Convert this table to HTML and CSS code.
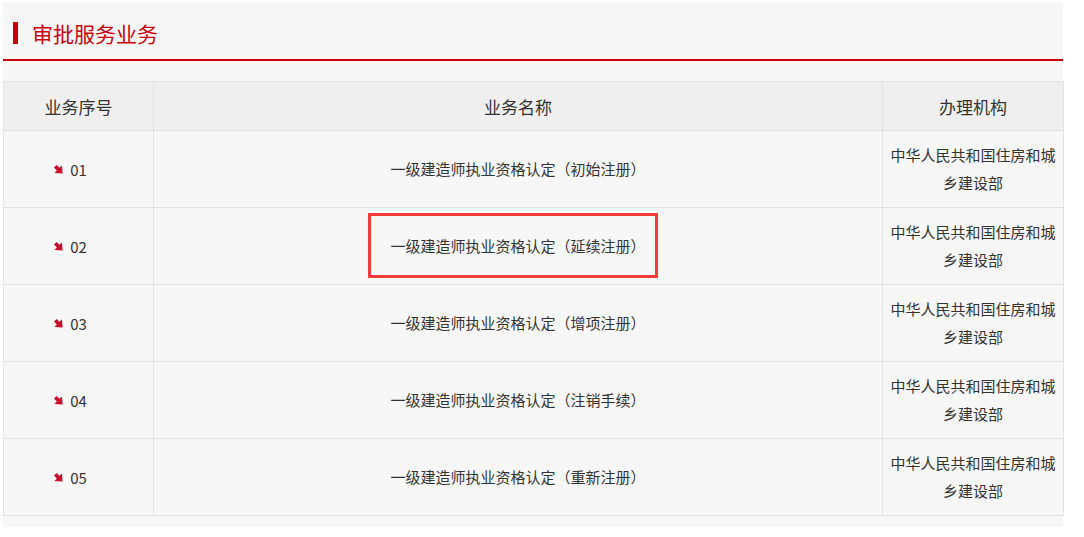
FILE: index.html
```html
<!DOCTYPE html>
<html lang="zh-CN">
<head>
<meta charset="utf-8">
<title>审批服务业务</title>
<link rel="stylesheet" href="styles.css">
</head>
<body>
<div class="panel">
  <div class="panel-head">
    <span class="bar"></span>
    <h2 class="title">审批服务业务</h2>
  </div>
  <table class="biz">
    <colgroup>
      <col class="c1"><col class="c2"><col class="c3">
    </colgroup>
    <thead>
      <tr><th>业务序号</th><th>业务名称</th><th>办理机构</th></tr>
    </thead>
    <tbody>
      <tr>
        <td><span class="no"><svg class="arr" viewBox="0 0 9 9" width="9" height="9"><path d="M0 2.6 L2.6 0 L5.4 2.8 L8 0.4 L8.6 8.6 L0.4 8 L2.8 5.4 Z" fill="#c8102e"/></svg>01</span></td>
        <td>一级建造师执业资格认定（初始注册）</td>
        <td class="org">中华人民共和国住房和城乡建设部</td>
      </tr>
      <tr>
        <td><span class="no"><svg class="arr" viewBox="0 0 9 9" width="9" height="9"><path d="M0 2.6 L2.6 0 L5.4 2.8 L8 0.4 L8.6 8.6 L0.4 8 L2.8 5.4 Z" fill="#c8102e"/></svg>02</span></td>
        <td><span class="marked">一级建造师执业资格认定（延续注册）</span></td>
        <td class="org">中华人民共和国住房和城乡建设部</td>
      </tr>
      <tr>
        <td><span class="no"><svg class="arr" viewBox="0 0 9 9" width="9" height="9"><path d="M0 2.6 L2.6 0 L5.4 2.8 L8 0.4 L8.6 8.6 L0.4 8 L2.8 5.4 Z" fill="#c8102e"/></svg>03</span></td>
        <td>一级建造师执业资格认定（增项注册）</td>
        <td class="org">中华人民共和国住房和城乡建设部</td>
      </tr>
      <tr>
        <td><span class="no"><svg class="arr" viewBox="0 0 9 9" width="9" height="9"><path d="M0 2.6 L2.6 0 L5.4 2.8 L8 0.4 L8.6 8.6 L0.4 8 L2.8 5.4 Z" fill="#c8102e"/></svg>04</span></td>
        <td>一级建造师执业资格认定（注销手续）</td>
        <td class="org">中华人民共和国住房和城乡建设部</td>
      </tr>
      <tr>
        <td><span class="no"><svg class="arr" viewBox="0 0 9 9" width="9" height="9"><path d="M0 2.6 L2.6 0 L5.4 2.8 L8 0.4 L8.6 8.6 L0.4 8 L2.8 5.4 Z" fill="#c8102e"/></svg>05</span></td>
        <td>一级建造师执业资格认定（重新注册）</td>
        <td class="org">中华人民共和国住房和城乡建设部</td>
      </tr>
    </tbody>
  </table>
</div>
</body>
</html>
```
FILE: styles.css
```css
html, body {
  margin: 0;
  padding: 0;
  background: #fff;
}
body {
  font-family: "Microsoft YaHei", "Noto Sans CJK SC", "Noto Sans", sans-serif;
  color: #333;
}
.panel {
  width: 1060px;
  margin: 2px 0 0 3px;
  background: #f7f7f7;
  padding-bottom: 11px;
}
.panel-head {
  display: flex;
  align-items: center;
  border-bottom: 2px solid #c8000a;
  padding-left: 10px;
  box-sizing: border-box;
  height: 59px;
}
.bar {
  width: 5px;
  height: 22px;
  background: #c8000a;
  margin-right: 14px;
  margin-top: 4px;
}
.title {
  margin: 4px 0 0 0;
  font-size: 21px;
  font-weight: normal;
  color: #c8000a;
  line-height: 28px;
}
.biz {
  margin-top: 20px;
  width: 1060px;
  border-collapse: collapse;
  table-layout: fixed;
  font-size: 15px;
}
.c1 { width: 150px; }
.c2 { width: 729px; }
.c3 { width: 181px; }
.biz th, .biz td {
  border: 1px solid #e3e3e3;
  text-align: center;
  padding: 0;
}
.biz th {
  height: 48px;
  background: #efefef;
  font-weight: normal;
  font-size: 17px;
  color: #333;
}
.biz td {
  height: 76px;
  line-height: 28px;
  background: #f7f7f7;
}
.biz td.org {
  padding: 0 6px;
}
.no {
  display: inline-flex;
  align-items: center;
  margin-right: 16px;
}
.arr {
  margin-right: 7px;
}
.marked {
  position: relative;
}
.marked::after {
  content: "";
  position: absolute;
  left: -22px;
  right: -12px;
  top: -22px;
  bottom: -22px;
  border: 3px solid #f33b3b;
}
```
